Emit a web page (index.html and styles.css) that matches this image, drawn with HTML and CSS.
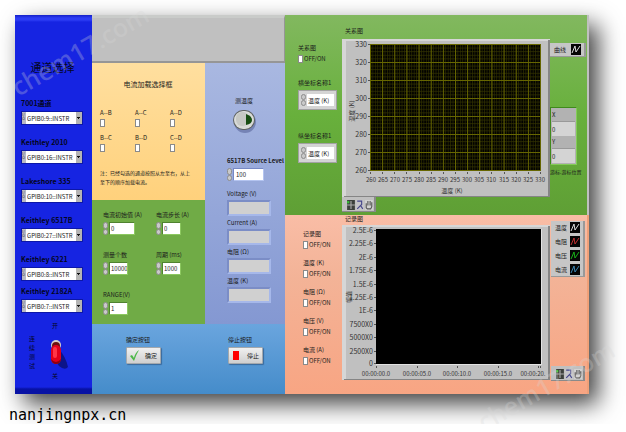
FILE: index.html
```
<!DOCTYPE html>
<html lang="zh-CN">
<head>
  <meta charset="UTF-8" />
  <meta name="viewport" content="width=device-width, initial-scale=1" />
  <title>电流加载测试</title>
  <link rel="stylesheet" href="styles.css">
</head>
<body>

  <!-- Shared icons -->
  <svg class="defs" width="0" height="0" aria-hidden="true">
    <symbol id="wave" viewBox="0 0 10 11">
      <rect width="10" height="11" fill="#050505"/>
      <path d="M1 9 L4 2 L5 8 L9 2" fill="none" stroke="currentColor" stroke-width="1"/>
    </symbol>
    <symbol id="cross" viewBox="0 0 7 9">
      <rect width="7" height="9" fill="#3c403c"/>
      <path d="M3.5 1v7M0 4.5h7" stroke="#aaa"/>
      <path d="M0 1h2v2h-2z" fill="#35c435"/>
    </symbol>
    <symbol id="lens" viewBox="0 0 7 9">
      <rect width="7" height="9" fill="#c4c4c8"/>
      <path d="M1 1h4v3l-4 4M4 5l2 3" fill="none" stroke="#45458a"/>
    </symbol>
    <symbol id="hand" viewBox="0 0 7 9">
      <rect width="7" height="9" fill="#d2d2d2"/>
      <path d="M1 3v4l1 1h3l1-2V2M2.5 5V1M4.5 5V1" fill="none" stroke="#555"/>
    </symbol>
  </svg>

  <main class="window">
    <!-- Instrument channels -->
    <aside class="channels">
      <h1>通道选择</h1>
      <div class="channel">
        <label for="ch1">7001通道</label>
        <div class="visa"><span>I/O</span><select id="ch1"><option>GPIB0:9::INSTR</option></select></div>
      </div>
      <div class="channel">
        <label for="ch2">Keithley 2010</label>
        <div class="visa"><span>I/O</span><select id="ch2"><option>GPIB0:16::INSTR</option></select></div>
      </div>
      <div class="channel">
        <label for="ch3">Lakeshore 335</label>
        <div class="visa"><span>I/O</span><select id="ch3"><option>GPIB0:10::INSTR</option></select></div>
      </div>
      <div class="channel">
        <label for="ch4">Keithley 6517B</label>
        <div class="visa"><span>I/O</span><select id="ch4"><option>GPIB0:27::INSTR</option></select></div>
      </div>
      <div class="channel">
        <label for="ch5">Keithley 6221</label>
        <div class="visa"><span>I/O</span><select id="ch5"><option>GPIB0:8::INSTR</option></select></div>
      </div>
      <div class="channel">
        <label for="ch6">Keithley 2182A</label>
        <div class="visa"><span>I/O</span><select id="ch6"><option>GPIB0:7::INSTR</option></select></div>
      </div>
      <div class="mode">
        <span class="mode-name" id="mode-name">连续测试</span>
        <div class="mode-switch">
          <span>开</span>
          <button type="button" role="switch" aria-checked="false" aria-labelledby="mode-name">
            <svg width="20" height="36" viewBox="0 0 20 36">
              <path d="M13 15 Q21 24 23 34 Q20 38 14 33 L9 25 Z" fill="#0c1488"/>
              <circle cx="11" cy="12" r="5" fill="#d8d0c8"/>
              <circle cx="11" cy="13" r="4" fill="#6c1010"/>
              <rect x="6" y="12" width="10" height="19" rx="5" fill="#e3001b"/>
              <rect x="8" y="14" width="4" height="11" rx="2" fill="#ff3548"/>
              <path d="M6 26 Q11 32 16 26 Q15 31 11 31 Q7 31 6 26" fill="#8d0010"/>
            </svg>
          </button>
          <span>关</span>
        </div>
      </div>
    </aside>

    <div class="settings">
      <div class="banner"></div>

      <section class="loads">
        <h2>电流加载选择框</h2>
        <div class="load-grid">
          <label>A--B<input type="checkbox"></label>
          <label>A--C<input type="checkbox"></label>
          <label>A--D<input type="checkbox"></label>
          <label>B--C<input type="checkbox"></label>
          <label>B--D<input type="checkbox"></label>
          <label>C--D<input type="checkbox"></label>
        </div>
        <p>注：已经勾选的通道按照从左至右，从上<br>至下的顺序加载电流。</p>
      </section>

      <section class="sweep">
        <div class="field">
          <label for="start">电流初始值 (A)</label>
          <div class="spin spin-wide"><span class="arrows"><button type="button" aria-label="增加"></button><button type="button" aria-label="减少"></button></span><input id="start" type="text" value="0"></div>
        </div>
        <div class="field">
          <label for="step">电流步长 (A)</label>
          <div class="spin"><span class="arrows"><button type="button" aria-label="增加"></button><button type="button" aria-label="减少"></button></span><input id="step" type="text" value="0"></div>
        </div>
        <div class="field">
          <label for="count">测量个数</label>
          <div class="spin"><span class="arrows"><button type="button" aria-label="增加"></button><button type="button" aria-label="减少"></button></span><input id="count" type="text" value="10000"></div>
        </div>
        <div class="field">
          <label for="period">周期 (ms)</label>
          <div class="spin"><span class="arrows"><button type="button" aria-label="增加"></button><button type="button" aria-label="减少"></button></span><input id="period" type="text" value="1000"></div>
        </div>
        <div class="field">
          <label for="range">RANGE(V)</label>
          <div class="spin"><span class="arrows"><button type="button" aria-label="增加"></button><button type="button" aria-label="减少"></button></span><input id="range" type="text" value="1"></div>
        </div>
      </section>

      <section class="readings">
        <div class="temp">
          <span id="temp-name">测温度</span>
          <button type="button" aria-labelledby="temp-name">
            <svg width="24" height="24" viewBox="0 0 24 24">
              <circle cx="13" cy="13" r="11" fill="#7583b5"/>
              <rect x="1" y="1" width="22" height="20" rx="10" fill="#5e6260"/>
              <rect x="2" y="2" width="20" height="18" rx="9" fill="#d9dbd8"/>
              <rect x="4" y="3" width="13" height="14" rx="6" fill="#c6c8c4"/>
              <path d="M14 5 Q20 7 20 11 Q20 15 14 16 Z" fill="#174d12"/>
            </svg>
          </button>
        </div>
        <div class="field source">
          <label for="level">6517B Source Level</label>
          <div class="spin spin-level"><span class="arrows"><button type="button" aria-label="增加"></button><button type="button" aria-label="减少"></button></span><input id="level" type="text" value="100"></div>
        </div>
        <div class="outputs">
          <label for="volt">Voltage (V)</label>
          <input id="volt" type="text" readonly>
          <label for="curr">Current (A)</label>
          <input id="curr" type="text" readonly>
          <label for="ohm">电阻 (Ω)</label>
          <input id="ohm" type="text" readonly>
          <label for="kelvin">温度 (K)</label>
          <input id="kelvin" type="text" readonly>
        </div>
      </section>

      <section class="actions">
        <div class="action">
          <span>确定按钮</span>
          <button type="button">
            <svg width="9" height="11" viewBox="0 0 9 11"><path d="M0 6 L2 5 L4 8 Q5 3 9 0 Q6 5 4 11 Z" fill="#4cb848"/></svg>
            确定
          </button>
        </div>
        <div class="action">
          <span>停止按钮</span>
          <button type="button">
            <svg width="9" height="11" viewBox="0 0 9 11"><rect x="1" y="1" width="6" height="9" fill="#f00"/></svg>
            停止
          </button>
        </div>
      </section>
    </div>

    <div class="graphs">
      <!-- X/Y relation graph -->
      <section class="graph relation">
        <div class="controls">
          <span>关系图</span>
          <label class="toggle"><input type="checkbox">OFF/ON</label>
          <div class="axis-name">
            <label for="xname">横坐标名称1</label>
            <div class="ring"><span class="arrows"><button type="button" aria-label="上一个"></button><button type="button" aria-label="下一个"></button></span><input id="xname" type="text" value="温度 (K)"></div>
          </div>
          <div class="axis-name">
            <label for="yname">纵坐标名称1</label>
            <div class="ring"><span class="arrows"><button type="button" aria-label="上一个"></button><button type="button" aria-label="下一个"></button></span><input id="yname" type="text" value="温度 (K)"></div>
          </div>
        </div>
        <div class="plot">
          <h2>关系图</h2>
          <svg viewBox="0 0 208 158">
            <defs>
              <pattern id="minor" x="28" y="5" width="2.4286" height="3.6" patternUnits="userSpaceOnUse">
                <path d="M.5 0V3.6M0 .5H2.5" stroke="#333300" stroke-width=".7"/>
              </pattern>
              <pattern id="major" x="28" y="5" width="12.143" height="18" patternUnits="userSpaceOnUse">
                <path d="M.5 0V18M0 .5H13" stroke="#666600"/>
              </pattern>
            </defs>
            <rect width="208" height="158" fill="#c0c0c0"/>
            <path d="M0 0H208V2H4V158H0Z" fill="#d6d6d6"/>
            <path d="M206 1H208V158H2V157H206Z" fill="#858585"/>
            <rect x="28" y="5" width="171" height="127" fill="#000"/>
            <rect x="28" y="5" width="171" height="127" fill="url(#minor)"/>
            <rect x="28" y="5" width="171" height="127" fill="url(#major)"/>
            <path d="M26 5.5h2M26 23.5h2M26 41.5h2M26 59.5h2M26 77.5h2M26 95.5h2M26 113.5h2M26 131.5h2M28.5 133v2M40.5 133v2M52.5 133v2M64.5 133v2M77.5 133v2M89.5 133v2M101.5 133v2M113.5 133v2M125.5 133v2M137.5 133v2M149.5 133v2M162.5 133v2M174.5 133v2M186.5 133v2M198.5 133v2" stroke="#555"/>
            <g class="ticks-y">
              <text x="25" y="8">330</text><text x="25" y="26">320</text>
              <text x="25" y="44">310</text><text x="25" y="62">300</text>
              <text x="25" y="80">290</text><text x="25" y="98">280</text>
              <text x="25" y="116">270</text><text x="25" y="134">260</text>
            </g>
            <g class="ticks-x">
              <text x="29" y="143">260</text><text x="41" y="143">265</text>
              <text x="53" y="143">270</text><text x="65" y="143">275</text>
              <text x="77" y="143">280</text><text x="89" y="143">285</text>
              <text x="101" y="143">290</text><text x="113" y="143">295</text>
              <text x="125" y="143">300</text><text x="137" y="143">305</text>
              <text x="149" y="143">310</text><text x="162" y="143">315</text>
              <text x="174" y="143">320</text><text x="186" y="143">325</text>
              <text x="198" y="143">330</text>
            </g>
            <text class="axis" x="110" y="154">温度 (K)</text>
            <text class="axis" transform="translate(12 72) rotate(-90)">温度 (K)</text>
          </svg>
          <div class="tools">
            <button type="button" aria-label="光标"><svg width="8" height="10"><use href="#cross"/></svg></button>
            <button type="button" aria-label="缩放"><svg width="8" height="10"><use href="#lens"/></svg></button>
            <button type="button" aria-label="平移"><svg width="8" height="10"><use href="#hand"/></svg></button>
          </div>
        </div>
        <div class="side">
          <div class="legend legend-single">
            <span>曲线</span><svg class="white" width="10" height="11"><use href="#wave"/></svg>
          </div>
          <div class="cursor">
            <label for="curx">X</label>
            <input id="curx" type="text" value="0">
            <label for="cury">Y</label>
            <input id="cury" type="text" value="0">
          </div>
          <span class="caption">游标.游标位置</span>
        </div>
      </section>

      <!-- Time record graph -->
      <section class="graph record">
        <div class="controls">
          <div class="switch-item"><span>记录图</span><label class="toggle"><input type="checkbox">OFF/ON</label></div>
          <div class="switch-item"><span>温度 (K)</span><label class="toggle"><input type="checkbox">OFF/ON</label></div>
          <div class="switch-item"><span>电阻 (Ω)</span><label class="toggle"><input type="checkbox">OFF/ON</label></div>
          <div class="switch-item"><span>电压 (V)</span><label class="toggle"><input type="checkbox">OFF/ON</label></div>
          <div class="switch-item"><span>电流 (A)</span><label class="toggle"><input type="checkbox">OFF/ON</label></div>
        </div>
        <div class="plot">
          <h2>记录图</h2>
          <svg viewBox="0 0 208 155">
            <rect width="208" height="155" fill="#c0c0c0"/>
            <path d="M0 0H208V2H4V155H0Z" fill="#d6d6d6"/>
            <path d="M206 1H208V155H2V154H206Z" fill="#858585"/>
            <rect x="34" y="4" width="166" height="136" fill="#e2e2e2"/>
            <rect x="34" y="4" width="165" height="135" fill="#000"/>
            <path d="M32 5.5h2M32 18.5h2M32 32.5h2M32 45.5h2M32 59.5h2M32 72.5h2M32 85.5h2M32 99.5h2M32 112.5h2M32 126.5h2M32 138.5h2M34.5 141v2M75.5 141v2M115.5 141v2M156.5 141v2M196.5 141v2M198.5 141v2" stroke="#555"/>
            <g class="ticks-y">
              <text x="31" y="8">2.5E-6</text><text x="31" y="21">2.25E-6</text>
              <text x="31" y="35">2E-6</text><text x="31" y="48">1.75E-6</text>
              <text x="31" y="62">1.5E-6</text><text x="31" y="75">1.25E-6</text>
              <text x="31" y="88">1E-6</text><text x="31" y="102">7500X0</text>
              <text x="31" y="115">5000X0</text><text x="31" y="129">2500X0</text>
              <text x="31" y="141">0</text>
            </g>
            <g class="ticks-x">
              <text x="34" y="151">00:00:00.0</text><text x="75" y="151">00:00:05.0</text>
              <text x="115" y="151">00:00:10.0</text><text x="156" y="151">00:00:15.0</text>
              <text x="191" y="151">00:00:20.</text>
            </g>
            <text class="axis" transform="translate(9 72) rotate(-90)">幅值</text>
          </svg>
        </div>
        <div class="side">
          <ul class="legend">
            <li>温度<svg class="white" width="10" height="11"><use href="#wave"/></svg></li>
            <li>电阻<svg class="red" width="10" height="11"><use href="#wave"/></svg></li>
            <li>电压<svg class="green" width="10" height="11"><use href="#wave"/></svg></li>
            <li>电流<svg class="blue" width="10" height="11"><use href="#wave"/></svg></li>
          </ul>
          <div class="tools">
            <button type="button" aria-label="光标"><svg width="8" height="10"><use href="#cross"/></svg></button>
            <button type="button" aria-label="缩放"><svg width="8" height="10"><use href="#lens"/></svg></button>
            <button type="button" aria-label="平移"><svg width="8" height="10"><use href="#hand"/></svg></button>
          </div>
        </div>
      </section>
    </div>

    <span class="watermark watermark-top">chem17.com</span>
    <span class="watermark watermark-bottom">chem17.com</span>
  </main>

  <footer>nanjingnpx.cn</footer>

</body>
</html>
```
FILE: styles.css
```
/* Basic reset */
* {
  box-sizing: border-box;
}
body {
  margin: 0;
  background: #fff;
  color: #1c1c1c;
  font-family: "Noto Sans CJK SC", "Liberation Sans", sans-serif;
  font-size: 6px;
  line-height: 8px;
}
h1, h2, p, ul {
  margin: 0;
  padding: 0;
}
h2 {
  font-size: 6px;
  font-weight: normal;
}
svg {
  display: block;
}
.defs {
  position: absolute;
}
button, input, select {
  font-family: inherit;
  font-size: 6px;
  color: inherit;
  margin: 0;
  padding: 0;
  border: none;
  border-radius: 0;
  min-width: 0;
}
button {
  background: none;
  cursor: pointer;
}
input[type="checkbox"] {
  appearance: none;
  width: 5px;
  height: 8px;
  background: #fff;
  border: 1px solid #8a8a8a;
}
input[type="checkbox"]:checked {
  background: #333;
}

/* Window */
.window {
  position: relative;
  display: flex;
  margin: 15px 37px 0 15px;
  box-shadow: 9px 10px 22px rgba(0, 0, 0, 0.75);
}

/* Channel sidebar */
.channels {
  width: 77px;
  padding: 44px 0 0 6px;
  background: linear-gradient(#1420c8 0, #2c3cf4 3px, #2c3cf4 5px, #1624e2 7px, #1624e2 calc(100% - 7px), #0812a4 calc(100% - 5px), #0812a4 100%);
  color: #04061c;
}
.channels h1 {
  margin-bottom: 23px;
  padding-right: 8px;
  font-size: 11px;
  line-height: 16px;
  font-weight: normal;
  text-align: center;
}
.channel {
  margin-bottom: 12px;
}
.channel:nth-of-type(5) {
  margin-bottom: 5px;
}
.channel:nth-of-type(6) {
  margin-bottom: 9px;
}
.channel label {
  display: block;
  margin-bottom: 3px;
  font-size: 7px;
  line-height: 10px;
  font-weight: bold;
  white-space: nowrap;
}
.visa {
  display: flex;
  width: 62px;
  height: 14px;
  border: 1px solid #0c17a8;
  background: #fff;
}
.visa span {
  width: 4px;
  background: #b9b9c4;
  color: #444;
  font-size: 4px;
  line-height: 4px;
  word-break: break-all;
  overflow: hidden;
}
.visa select {
  flex: 1;
  appearance: none;
  padding: 0 6px 0 1px;
  color: #222;
  background:
    linear-gradient(#111, #111) right 2px top 5px / 3px 1px no-repeat,
    linear-gradient(#111, #111) right 3px top 6px / 1px 1px no-repeat,
    linear-gradient(#b4b4b4, #b4b4b4) right / 6px 100% no-repeat,
    #fff;
}
.mode {
  display: flex;
}
.mode-name {
  width: 6px;
  margin: 12px 8px 0;
  line-height: 9px;
  word-break: break-all;
}
.mode-switch {
  display: flex;
  flex-direction: column;
  align-items: center;
  gap: 3px;
  width: 24px;
}
.mode-switch button {
  height: 36px;
}
.mode-switch svg {
  overflow: visible;
}

/* Settings in the middle */
.settings {
  display: grid;
  width: 193px;
  grid-template-columns: 113px 80px;
  grid-template-rows: 48px minmax(137px, auto) minmax(124px, auto) 1fr;
}
.banner {
  grid-column: 1 / 3;
  background: #c0c0c0;
  border-top: 3px solid #c9cbc9;
  border-right: 1px solid #969696;
  border-bottom: 2px solid #969696;
}
.loads {
  padding: 15px 7px 0 8px;
  background: linear-gradient(#ffdf9f, #ffd17c);
}
.loads h2 {
  margin-bottom: 19px;
  padding-right: 2px;
  font-size: 7px;
  line-height: 12px;
  text-align: center;
}
.load-grid {
  display: grid;
  grid-template-columns: repeat(3, 35px);
  row-gap: 7px;
}
.load-grid label {
  display: flex;
  flex-direction: column;
  gap: 2px;
}
.loads p {
  margin-top: 16px;
  font-size: 5px;
  line-height: 9px;
  white-space: nowrap;
}

.sweep {
  display: grid;
  grid-template-columns: 53px 1fr;
  align-content: start;
  row-gap: 16px;
  padding: 11px 0 0 11px;
  background: #70ab46;
}
.field label {
  display: block;
  margin-bottom: 3px;
  white-space: nowrap;
}
.spin {
  display: flex;
  gap: 1px;
  width: 25px;
  height: 13px;
}
.spin-wide {
  width: 32px;
}
.spin-level {
  width: 37px;
}
.spin input {
  flex: 1;
  width: 0;
  padding-left: 1px;
  background: #fff;
  border: 1px solid #4f8230;
  border-right-color: #8cc860;
  border-bottom-color: #8cc860;
}
.spin-level input {
  padding-left: 2px;
  border-color: #7688c4 #b4c4f0 #b4c4f0 #7688c4;
}
.arrows {
  display: flex;
  flex-direction: column;
  width: 5px;
}
.arrows button {
  flex: 1;
  border-radius: 3px;
  border: 1px solid #8d8d8d;
  background: #c9c9c9;
}

.readings {
  grid-column: 2;
  grid-row: 2 / 4;
  padding: 34px 0 0 22px;
  background: linear-gradient(#a9b8e1, #8498d2);
}
.temp {
  display: flex;
  flex-direction: column;
  align-items: center;
  gap: 4px;
  width: 34px;
  margin-bottom: 24px;
}
.temp button {
  height: 24px;
}
.source {
  margin-bottom: 9px;
}
.source label {
  font-weight: bold;
}
.outputs label {
  display: block;
  margin-bottom: 2px;
}
.outputs input {
  display: block;
  width: 44px;
  height: 16px;
  margin-bottom: 3px;
  background: #d0d0d0;
  border: 2px solid #7b8dc6;
  border-right-color: #a6b8ea;
  border-bottom-color: #a6b8ea;
}

.actions {
  grid-column: 1 / 3;
  display: flex;
  gap: 67px;
  padding: 12px 0 0 34px;
  background: linear-gradient(#6aa5de, #458cca);
}
.action span {
  display: block;
  margin-bottom: 3px;
}
.action button {
  display: flex;
  align-items: center;
  gap: 6px;
  width: 35px;
  height: 17px;
  padding: 0 3px;
  border: 1px solid #a4a8ac;
  border-radius: 1px;
  background: linear-gradient(#f0f0f0, #cfcfcf);
  box-shadow: 1px 1px 1px #3a6a9c;
  white-space: nowrap;
}

/* Graph sections */
.graphs {
  flex: 1;
  display: grid;
  grid-template-rows: minmax(200px, auto) minmax(179px, auto);
  min-width: 0;
}
.graph {
  display: grid;
  grid-template-columns: 57px minmax(0, 1fr) 37px;
}
.relation {
  background: linear-gradient(#82b85f, #68b03c 50%, #5f9f35);
  border-right: 2px solid #c0c0c0;
}
.record {
  background: linear-gradient(#f9bda6, #f3b397 35%, #f8a583);
  border-right: 2px solid #f0a078;
}
.relation .controls {
  padding: 29px 0 0 13px;
}
.record .controls {
  padding: 15px 0 0 18px;
}
.controls span {
  display: block;
}
.toggle {
  display: flex;
  align-items: center;
  gap: 1px;
  margin-top: 3px;
}
.axis-name {
  margin-top: 16px;
}
.axis-name + .axis-name {
  margin-top: 22px;
}
.axis-name label {
  display: block;
  margin-bottom: 3px;
}
.ring {
  display: flex;
  gap: 1px;
  width: 39px;
  height: 20px;
  padding: 3px 2px;
  background: #d4d4d4;
  border: 1px solid #a2a2a2;
}
.ring .arrows {
  display: flex;
  width: 5px;
}
.ring input {
  flex: 1;
  width: 0;
  padding-left: 1px;
  background: #fff;
}
.switch-item {
  margin-bottom: 10px;
}
.plot h2 {
  padding-left: 3px;
}
.plot > svg {
  width: 100%;
  height: auto;
}
.plot text {
  font-size: 6px;
  fill: #333;
  text-anchor: middle;
}
.plot .ticks-y text {
  font-size: 7px;
  text-anchor: end;
}
.relation .plot {
  padding-top: 12px;
}
.relation .plot h2 {
  margin-bottom: 4px;
}
.record .plot h2 {
  margin-bottom: 2px;
}
.tools {
  display: flex;
  gap: 1px;
  width: 34px;
  height: 15px;
  padding: 2px 0 0 5px;
  background: #c0c0c0;
  border-right: 2px solid #8a8a8a;
  border-bottom: 1px solid #8a8a8a;
}
.side {
  display: flex;
  flex-direction: column;
}
.relation .side {
  padding-top: 28px;
}
.record .side {
  justify-content: space-between;
  padding: 6px 0 13px 1px;
}
.legend {
  display: flex;
  flex-direction: column;
  gap: 3px;
  width: 34px;
  padding: 1px 3px 1px 4px;
  list-style: none;
  background: #c6c6c6;
  border-right: 2px solid #999;
  border-bottom: 1px solid #999;
}
.legend li, .legend-single {
  display: flex;
  flex-direction: row;
  justify-content: space-between;
  align-items: center;
}
.legend-single {
  width: 36px;
  height: 14px;
}
.white { color: #ddd; }
.red { color: #c03030; }
.green { color: #18b018; }
.blue { color: #3a86b4; }

.cursor {
  width: 27px;
  margin: 50px 0 3px;
  padding: 1px;
  background: #b2b2b2;
  border: 1px solid #3f8a1c;
  border-right-color: #84cc58;
  border-bottom-color: #84cc58;
}
.cursor label {
  display: block;
  height: 12px;
  line-height: 12px;
}
.cursor input {
  display: block;
  width: 100%;
  height: 15px;
  background: #d4d4d4;
  border-top: 1px solid #999;
}
.caption {
  font-size: 5px;
  white-space: nowrap;
}

/* Watermarks lie over the panels */
.watermark {
  position: absolute;
  font-family: "Open Sans", sans-serif;
  font-size: 25px;
  line-height: 26px;
  font-weight: 600;
  color: rgba(215, 215, 215, 0.28);
  transform: rotate(-30deg);
  pointer-events: none;
}
.watermark-top {
  top: 22px;
  left: -12px;
}
.watermark-bottom {
  right: -34px;
  bottom: -4px;
}

footer {
  position: relative;
  padding: 12px 9px 0;
  font-family: "DejaVu Sans Mono", monospace;
  font-size: 15px;
  line-height: 18px;
  color: #000;
}
```
